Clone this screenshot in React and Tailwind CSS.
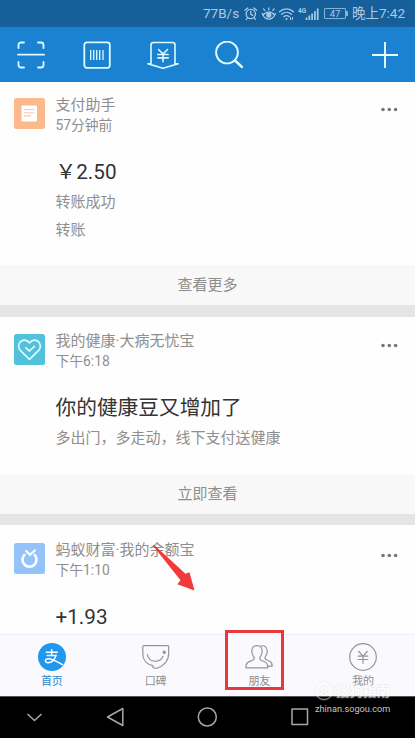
const MORE_DOTS = [2, 8.3, 14.6];

function BillIcon() {
  return (
    <svg viewBox="0 0 31 31" className="w-[31px] h-[31px] shrink-0">
      <rect width="31" height="31" rx="2.5" fill="#fdb98b"/>
      <rect x="7.5" y="7.5" width="15.5" height="16" rx="1" fill="#fff"/>
      <path d="M10 11.5h10.5M10 14.8h10.5M10 17.9h7" stroke="#fdc9a6" strokeWidth="1.1"/>
    </svg>
  );
}

function HealthIcon() {
  return (
    <svg viewBox="0 0 31 31" className="w-[31px] h-[31px] shrink-0" fill="none" stroke="#e2fbff" strokeWidth="1.7" strokeLinecap="round" strokeLinejoin="round">
      <rect width="31" height="31" rx="2.5" fill="#51c1dc" stroke="none"/>
      <path d="M15.5 25.3 6.3 16.4C3.6 13.4 4.2 9 7.4 7c2.8-1.6 6-.9 8.1 1.9C17.6 6.1 20.8 5.4 23.6 7c3.2 2 3.8 6.4 1.1 9.4z"/>
      <path d="m11.8 13.8 3.7 3.2 4.9-4.7"/>
    </svg>
  );
}

function FortuneIcon() {
  return (
    <svg viewBox="0 0 31 31" className="w-[31px] h-[31px] shrink-0">
      <rect width="31" height="31" rx="2.5" fill="#94c3fc"/>
      <path d="M10.3 12a7 7 0 1 0 10.4 0" fill="none" stroke="#fff" strokeWidth="2.6" strokeLinecap="round"/>
      <path d="m12.2 8 3.6 3.8 5-4.3" fill="none" stroke="#fff" strokeWidth="2.2" strokeLinecap="round" strokeLinejoin="round"/>
    </svg>
  );
}

const CARDS = [
  { id:'pay',     icon:BillIcon,    name:'支付助手',            time:'57分钟前', title:'￥2.50',             lines:['转账成功','转账'], action:'查看更多', size:'h-[183px] pt-[12.5px]', foot:'h-10' },
  { id:'health',  icon:HealthIcon,  name:'我的健康·大病无忧宝', time:'下午6:18', title:'你的健康豆又增加了', lines:['多出门，多走动，线下支付送健康'], action:'立即查看', size:'h-[158px] pt-[14px]', foot:'h-[39px]' },
  { id:'fortune', icon:FortuneIcon, name:'蚂蚁财富·我的余额宝', time:'下午1:10', title:'+1.93',              lines:[], size:'h-[110px] pt-[15px]' },
];

function StatusBar() {
  return (
    <div className="h-[27px] shrink-0 bg-[#155f9a] text-[#a9cbe6] flex items-center justify-end pr-[8px] text-[13px] leading-none">
      <span className="w-[37px] whitespace-nowrap text-[13.5px]">77B/s</span>
      <svg viewBox="0 0 84 18" className="w-[84px] h-[18px] ml-[4px]" fill="none" stroke="currentColor" strokeWidth="1.3">
        {/* alarm */}
        <circle cx="6.8" cy="9" r="4.6"/>
        <path d="M6.8 6.3v3l2 1M1 5.3l2.8-2.4M12.6 5.3 9.8 2.9M3.5 12.5 2.2 14.5M10.1 12.5l1.3 2" strokeLinecap="round"/>
        {/* eye comfort */}
        <path d="M18.2 8.5c1.5 4 3.8 5.6 6.6 5.6s5.1-1.6 6.6-5.6M19.6 9.5c2.8-3.6 7.6-3.6 10.4 0M20.8 5.4l-1.3-1.5M24.8 4.7V3M28.800 5.4l1.3-1.5" strokeLinecap="round"/>
        <circle cx="24.8" cy="10" r="2" fill="currentColor"/>
        {/* wifi */}
        <path d="M35.500 6.8c4.200-4 9.800-4 14 0M37.500 9.3c3-2.700 7-2.700 10 0M39.800 11.700c1.700-1.400 3.700-1.400 5.400 0" strokeLinecap="round"/>
        <circle cx="42.500" cy="14" r="1.100" fill="currentColor" stroke="none"/>
        <path d="M46.500 12v3M48.500 12v3" strokeWidth="1"/>
        {/* signal */}
        <text x="54" y="7.500" fill="currentColor" stroke="none" fontSize="6.500" fontWeight="700">4G</text>
        <path d="M62.500 15v-2.500M65.300 15v-4.500M68.100 15V8.500M70.900 15V6M73.700 15V3.500" strokeWidth="1.700"/>
      </svg>
      <div className="-ml-[4px] w-[22px] h-[11px] border border-[#84b2d6] rounded-[1px] text-[9.5px] leading-[10px] text-center">47</div>
      <div className="w-[2px] h-[5px] bg-[#84b2d6]"/>
      <span className="ml-[4px] whitespace-nowrap w-[55px] text-[13.5px]">晚上7:42</span>
    </div>
  );
}

function Header() {
  return (
    <div className="h-[55px] shrink-0 bg-[#1b82d1] flex items-center justify-between pl-[17px] pr-[17px]">
      <div className="flex items-center gap-[37px]">
        <svg viewBox="0 0 28 28" className="w-7 h-7" fill="none" stroke="#dcfbff" strokeWidth="1.8" strokeLinecap="round">
          <path d="M1.5 7V4a2.500 2.500 0 0 1 2.500-2.500h3M21 1.500h3A2.500 2.500 0 0 1 26.500 4v3M26.500 21v3a2.500 2.500 0 0 1-2.500 2.500h-3M7 26.500H4A2.500 2.500 0 0 1 1.500 24v-3M1 13.700h26"/>
        </svg>
        <svg viewBox="0 0 28 28" className="w-7 h-7 ml-px" fill="none" stroke="#dcfbff" strokeWidth="1.8">
          <rect x="1.300" y="1.300" width="25.500" height="25.500" rx="2.500"/>
          <path d="M7.700 9v10M10.700 9v10M13.700 9v10M16.700 9v10M20 9v10" strokeWidth="1.300"/>
        </svg>
        <svg viewBox="0 0 32 28" className="w-8 h-7 -ml-[1px]" fill="none" stroke="#dcfbff" strokeWidth="1.600" strokeLinecap="round" strokeLinejoin="round">
          <path d="M4 23V4a2.500 2.500 0 0 1 2.500-2.500h19A2.500 2.500 0 0 1 28 4v19M4 22.800H.9L16 27.300l15.100-4.500H28"/>
          <path d="m11.500 8.500 4.500 4.500 4.500-4.500M10.800 13.500h10.400M10.800 16.900h10.400M16 13v7.800"/>
        </svg>
        <svg viewBox="0 0 28 28" className="w-7 h-7 -ml-px" fill="none" stroke="#dcfbff" strokeWidth="1.900" strokeLinecap="round">
          <circle cx="12" cy="11.500" r="10.900"/>
          <path d="m20 19.500 7 6.500" strokeWidth="2.400"/>
        </svg>
      </div>
      <svg viewBox="0 0 26 26" className="w-[26px] h-[26px]" stroke="#eafdff" strokeWidth="1.900">
        <path d="M0 13h26M13 0v26"/>
      </svg>
    </div>
  );
}

function FeedCard({ card }) {
  return (
    <div className="shrink-0">
      <div className={`flex pl-[14px] pr-[17px] bg-[#fefefe] ${card.size}`}>
        <div className="pt-[3px]"><card.icon/></div>
        <div className="ml-[10.5px] flex-1 whitespace-nowrap">
          <p className="text-[15px] leading-5 text-[#8e8e8e]">{card.name}</p>
          <p className="text-[13.8px] leading-5 text-[#8e8e8e]">{card.time}</p>
          <p className="mt-[22px] text-[20.7px] leading-[30px] text-[#333]">{card.title}</p>
          <div className="mt-[5px] flex flex-col gap-2">
            {card.lines.map(l=><p key={l} className="text-[15px] leading-5 text-[#8e8e8e]">{l}</p>)}
          </div>
        </div>
        <svg viewBox="0 0 17 5" className="w-[17px] h-[5px] mt-[12.500px]" fill="#777">
          {MORE_DOTS.map(x=><circle key={x} cx={x} cy="2.500" r="1.800"/>)}
        </svg>
      </div>
      {card.action && <>
        <button className={`w-full block bg-[#f8f8f8] text-[15px] text-[#8e8e8e] pt-px ${card.foot}`}>{card.action}</button>
        <div className="h-[11.5px] bg-[#e5e5e5]"/>
      </>}
    </div>
  );
}

function HomeIcon() {
  return (
    <svg viewBox="0 0 28 28" className="w-7 h-7" fill="none" stroke="#fff" strokeWidth="1.500" strokeLinecap="round">
      <circle cx="14" cy="14" r="14" fill="#2197ee" stroke="none"/>
      <path d="M8.300 9.300h11M13.700 6.700v5.600M9.300 12.500h8.700c-1.500 4.200-4.700 7.200-8 7.200-3.400 0-3.500-4 .3-4 4.400 0 8.700 2.900 14.200 6"/>
    </svg>
  );
}

function KoubeiIcon() {
  return (
    <svg viewBox="0 0 28 28" className="w-7 h-7" fill="none" stroke="#949494" strokeWidth="1.200" strokeLinecap="round" strokeLinejoin="round">
      <path d="M2.100 2.600h23.300c.8 0 1.300.4 1.300 1.200v6.700c0 7.500-5.500 12.800-12.500 15l-3.300-1v-1.800C4.800 21.400.8 17 .8 11V3.800c0-.8.500-1.200 1.300-1.200z"/>
      <path d="M5.500 11.500c1.200 8.500 12.500 8.800 15.500 1.800"/>
      <circle cx="22.200" cy="9.300" r="1.100" fill="#949494"/>
    </svg>
  );
}

function FriendsIcon() {
  return (
    <svg viewBox="0 0 28 28" className="w-7 h-7" fill="none" stroke="#949494" strokeWidth="1.200" strokeLinecap="round" strokeLinejoin="round">
      <path d="M12 2.700c-3.200 0-5.200 2.300-5.200 5.600 0 2.300.7 4 1.900 5.500.9 1.300.6 2.700-1 3.400l-4 1.700C1.600 19.800.8 21 .8 24.800H22.800c0-3.800-.7-4.900-2.800-5.800l-3.900-1.800c-1.500-.8-1.700-2.200-.8-3.400 1.200-1.500 1.900-3.200 1.900-5.500 0-3.300-2-5.600-5.200-5.600z"/>
      <path d="M15.500 3.200c3.700-1.500 6.700 1 6.700 5 0 2.300-.7 3.900-1.700 5.200-.9 1.300-.6 2.600.8 3.300l3.400 1.500c1.900.9 2.500 1.900 2.500 5H23"/>
    </svg>
  );
}

function MineIcon() {
  return (
    <svg viewBox="0 0 28 28" className="w-7 h-7" fill="none" stroke="#949494" strokeWidth="1.200" strokeLinecap="round">
      <circle cx="14" cy="14" r="13.300"/>
      <path d="m9.800 8.500 4.200 4.700 4.200-4.700M9.200 13.200h9.600M9.200 16.500h9.600M14 13.200v7"/>
    </svg>
  );
}

const TABS = [
  { id:'home',    label:'首页', icon:HomeIcon },
  { id:'koubei',  label:'口碑', icon:KoubeiIcon },
  { id:'friends', label:'朋友', icon:FriendsIcon },
  { id:'mine',    label:'我的', icon:MineIcon },
];

export default function App() {
  return (
    <div className="relative w-[415px] h-[738px] overflow-hidden flex flex-col bg-[#fefefe] font-[Roboto,'Noto_Sans_CJK_SC',sans-serif]">
      <StatusBar/>
      <Header/>

      <div className="flex-1 min-h-0 overflow-hidden flex flex-col">
        {CARDS.map(c=><FeedCard key={c.id} card={c}/>)}
      </div>

      {/* Tab bar */}
      <div className="h-[62px] shrink-0 grid grid-cols-4 bg-[#fafafe] border-t border-[#eef0f8]">
        {TABS.map(t=>(
          <button key={t.id} className={`flex flex-col items-center pt-2 text-[11px] leading-[18px] ${t.id==='home'?'text-[#2c87c9]':'text-[#8e8e8e]'}`}>
            <t.icon/>
            <span className="mt-[2px]">{t.label}</span>
          </button>
        ))}
      </div>

      {/* System navigation */}
      <div className="h-[42px] shrink-0 bg-black border-t border-[#555] flex items-center pl-[26px]">
        <svg viewBox="0 0 284 22" className="w-[284px] h-[22px]" fill="none" stroke="#a8a8a8" strokeWidth="1.500" strokeLinejoin="round">
          <path d="m1.500 7 7 6.500 7-6.500"/>
          <path d="M96.800 1.500v17L81.500 10z"/>
          <circle cx="181.300" cy="10" r="9"/>
          <rect x="266" y="2" width="15.500" height="15.500"/>
        </svg>
      </div>

      {/* Tutorial marks */}
      <svg viewBox="0 0 44 48" className="absolute left-[152px] top-[544px] w-11 h-12" fill="#f23a3c">
        <path d="M.8 1.500 2.200 1 33.500 29.700 37.500 28.300 42.500 46.500 25.300 40.200 28.500 36.300z"/>
      </svg>
      <div className="absolute left-[225px] top-[630px] w-[59px] h-[60px] border-[3px] border-[#e9383b]"/>

      {/* Watermark */}
      <div className="absolute left-[315px] top-[681px] w-[78px] text-white">
        <div className="flex items-center gap-[3px] text-[13.500px] font-bold leading-5 opacity-60 [text-shadow:0_0_2px_#ccc]">
          <span className="w-[18px] h-[18px] shrink-0 rounded-full border border-white text-center leading-4 shadow-[0_0_2px_#ccc]">S</span>
          <span className="whitespace-nowrap">搜狗指南</span>
        </div>
        <p className="text-[9.2px] leading-3 mt-[2px] text-[#c4c4c4]">zhinan.sogou.com</p>
      </div>
    </div>
  );
}
